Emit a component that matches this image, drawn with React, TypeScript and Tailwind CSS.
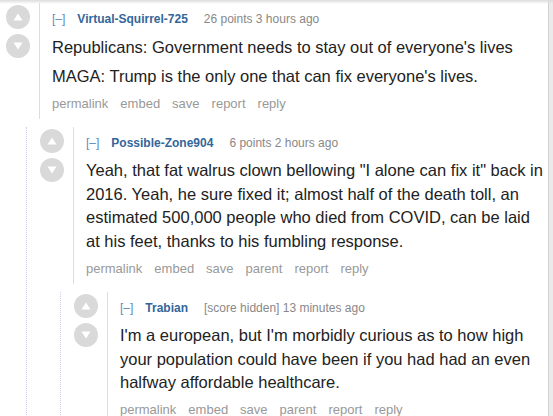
import React from "react";

type C = {
  author: string;
  tagline: string;
  paras: string[];
  actions: string[];
  children?: C[];
};

const data: C = {
  author: "Virtual-Squirrel-725",
  tagline: "26 points 3 hours ago",
  paras: [
    "Republicans: Government needs to stay out of everyone's lives",
    "MAGA: Trump is the only one that can fix everyone's lives.",
  ],
  actions: ["permalink", "embed", "save", "report", "reply"],
  children: [
    {
      author: "Possible-Zone904",
      tagline: "6 points 2 hours ago",
      paras: [
        'Yeah, that fat walrus clown bellowing "I alone can fix it" back in 2016. Yeah, he sure fixed it; almost half of the death toll, an estimated 500,000 people who died from COVID, can be laid at his feet, thanks to his fumbling response.',
      ],
      actions: ["permalink", "embed", "save", "parent", "report", "reply"],
      children: [
        {
          author: "Trabian",
          tagline: "[score hidden] 13 minutes ago",
          paras: [
            "I'm a european, but I'm morbidly curious as to how high your population could have been if you had had an even halfway affordable healthcare.",
          ],
          actions: ["permalink", "embed", "save", "parent", "report", "reply"],
        },
      ],
    },
  ],
};

function Arrow({ up }: { up: boolean }) {
  return (
    <div className="w-[24px] h-[24px] rounded-full bg-[#d9d9d9] flex items-center justify-center">
      <svg width="10" height="8" viewBox="0 0 10 8">
        {up ? (
          <polygon points="5,0.5 9.5,7.5 0.5,7.5" fill="#ffffff" />
        ) : (
          <polygon points="0.5,0.5 9.5,0.5 5,7.5" fill="#ffffff" />
        )}
      </svg>
    </div>
  );
}

function Comment({ c }: { c: C }) {
  return (
    <div>
      <div className="flex">
        <div className="w-[24px] shrink-0 pt-[2px] flex flex-col gap-[5px]">
          <Arrow up />
          <Arrow up={false} />
        </div>
        <div className="ml-[9px] flex-1 border-l border-[#dddddd] pl-[12px] pt-[8px] pb-[6px]">
          <div className="flex items-center text-[12px] leading-[16px]">
            <span className="text-[#5b8cc0]">[–]</span>
            <span className="ml-[12px] font-bold text-[#336699]">{c.author}</span>
            <span className="ml-[16px] text-[#888888]">{c.tagline}</span>
          </div>
          <div className="mt-[8.5px] flex flex-col gap-[5.5px] text-[16.5px] leading-[23.5px] text-[#222222]">
            {c.paras.map((p, i) => (
              <p key={i}>{p}</p>
            ))}
          </div>
          <div className="mt-[6.5px] flex gap-[12px] text-[13px] leading-[18px] text-[#999999]">
            {c.actions.map((a) => (
              <span key={a}>{a}</span>
            ))}
          </div>
        </div>
      </div>
      {c.children && c.children.length > 0 && (
        <div className="ml-[20px] mt-[8px] border-l border-dotted border-[#ccccee] pl-[13px]">
          {c.children.map((ch, i) => (
            <Comment key={i} c={ch} />
          ))}
        </div>
      )}
    </div>
  );
}

export default function App() {
  return (
    <div
      className="relative flex w-[553px] h-[416px] overflow-hidden bg-white"
      style={{ fontFamily: "'Liberation Sans', Arial, sans-serif" }}
    >
      <div className="w-[548px] shrink-0 pt-[3px] pl-[6px]">
        <Comment c={data} />
      </div>
      <div className="flex-1 border-l border-[#d2d2d2] bg-[#ebebeb]" />
      <div className="absolute left-0 top-0 w-full h-[4px] bg-gradient-to-b from-[#dcdcdc] to-transparent" />
    </div>
  );
}
